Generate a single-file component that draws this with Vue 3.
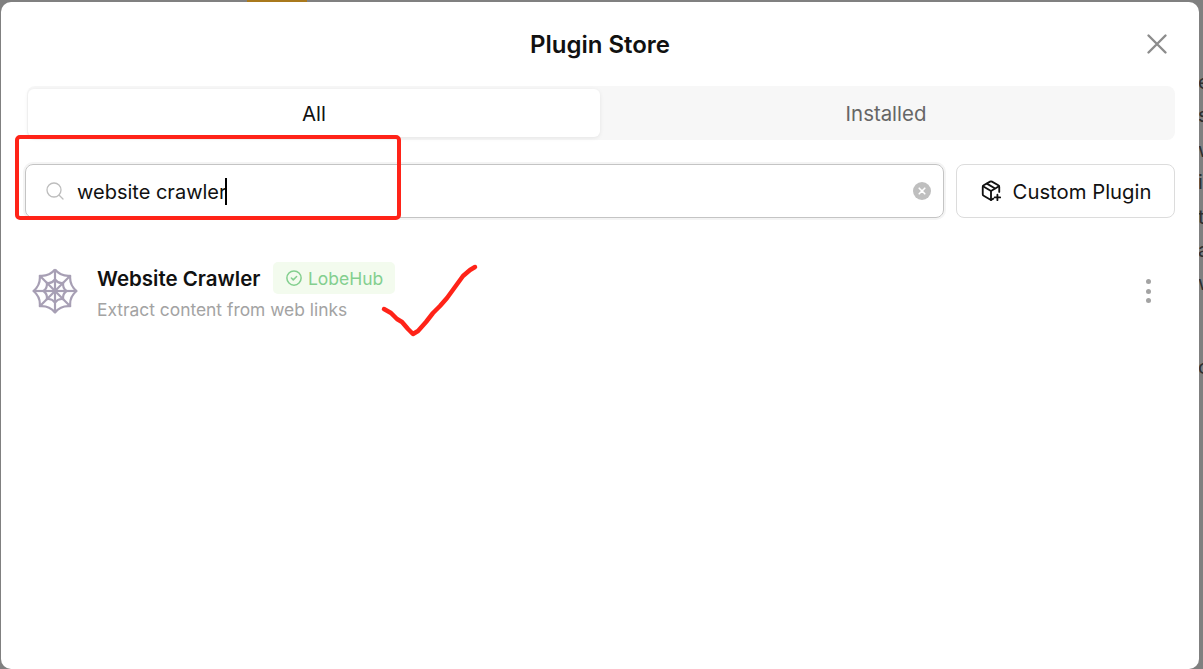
<template>
  <div class="backdrop">
    <div class="behind-strip"></div>
    <span
      v-for="g in behindGlyphs"
      :key="g.top"
      class="behind-glyph"
      :style="{ top: g.top + 'px' }"
    >{{ g.text }}</span>
    <div class="modal">
      <header class="modal-header">
        <h1>Plugin Store</h1>
        <button class="close-btn" aria-label="Close">
          <svg width="24" height="24" viewBox="0 0 24 24" fill="none" stroke="#8c8c8c" stroke-width="2.400" stroke-linecap="round">
            <path d="M3.500 3.500 20.500 20.500M20.500 3.500 3.500 20.500" />
          </svg>
        </button>
      </header>

      <div class="segmented">
        <div class="segment active">All</div>
        <div class="segment">Installed</div>
      </div>

      <div class="toolbar">
        <div class="search">
          <svg class="search-icon" width="20" height="20" viewBox="0 0 20 20" fill="none" stroke="#bdbdbd" stroke-width="1.300" stroke-linecap="round">
            <circle cx="9" cy="9" r="7" />
            <path d="M14.200 14.200 18 18" />
          </svg>
          <span class="search-text">website crawler</span>
          <span class="caret"></span>
          <svg class="clear-icon" width="18" height="18" viewBox="0 0 18 18">
            <circle cx="9" cy="9" r="9" fill="#bfbfbf" />
            <path d="M6.200 6.200 11.800 11.800M11.800 6.200 6.200 11.800" stroke="#fff" stroke-width="1.600" stroke-linecap="round" />
          </svg>
        </div>
        <button class="custom-btn">
          <svg width="22" height="22" viewBox="0 0 24 24" fill="none" stroke="#111" stroke-width="2" stroke-linecap="round" stroke-linejoin="round">
            <path d="M21 13V7.500a2 2 0 0 0-1-1.700l-7-4a2 2 0 0 0-2 0l-7 4a2 2 0 0 0-1 1.700v8a2 2 0 0 0 1 1.700l7 4a2 2 0 0 0 2 0l1.500-.9" />
            <path d="M7.500 4 16.500 9.200M3.300 6.800 12 12l8.700-5.200M12 22V12" />
            <path d="M19 16v6M16 19h6" />
          </svg>
          <span>Custom Plugin</span>
        </button>
      </div>

      <div class="plugin-row">
        <svg class="web-icon" width="46" height="46" viewBox="0 0 46 46" fill="none" stroke="#a79fb4" stroke-width="2.200" stroke-linejoin="round">
          <path v-for="(d, i) in webPaths" :key="i" :d="d" />
        </svg>
        <div class="plugin-info">
          <div class="plugin-title">
            <span class="plugin-name">Website Crawler</span>
            <span class="tag">
              <svg width="18" height="18" viewBox="0 0 24 24" fill="none" stroke="#83cf8e" stroke-width="2" stroke-linecap="round" stroke-linejoin="round">
                <circle cx="12" cy="12" r="9.500" />
                <path d="m8.500 12 2.500 2.500 4.500-4.500" />
              </svg>
              LobeHub
            </span>
          </div>
          <div class="plugin-desc">Extract content from web links</div>
        </div>
        <button class="more-btn" aria-label="More">
          <span></span><span></span><span></span>
        </button>
      </div>
    </div>

    <!-- red marks drawn over the screenshot -->
    <svg class="marks" width="1203" height="669" viewBox="0 0 1203 669" fill="none" stroke="#ff2318" stroke-linejoin="round" stroke-linecap="round">
      <rect x="17" y="137" width="382" height="81" rx="3" stroke-width="4" />
      <path
        d="M384 309 391 313 397 319 402 322 408 329 413 334 418 331 426 322 433 313 440 306 447 298 455 287 463 276 470 270 475 267"
        stroke-width="4.500"
      />
    </svg>
  </div>
</template>

<script setup>
// letters of the page behind the modal, only their left edge shows
const behindGlyphs = [
  { text: 'e', top: 70 },
  { text: 's', top: 103 },
  { text: 'w', top: 138 },
  { text: 'i', top: 170 },
  { text: 't', top: 205 },
  { text: 'a', top: 238 },
  { text: 'w', top: 271 },
  { text: 'c', top: 355 }
]

// spider web: spokes plus a ring of sagging threads
const cx = 23
const cy = 23
const spokes = 8
const webPaths = []

function ringPath(radius, sag) {
  let d = ''
  for (let i = 0; i < spokes; i++) {
    const a = (i * Math.PI * 2) / spokes - Math.PI / 2
    const b = ((i + 1) * Math.PI * 2) / spokes - Math.PI / 2
    const m = (a + b) / 2
    const x1 = cx + radius * Math.cos(a)
    const y1 = cy + radius * Math.sin(a)
    const x2 = cx + radius * Math.cos(b)
    const y2 = cy + radius * Math.sin(b)
    const qx = cx + sag * Math.cos(m)
    const qy = cy + sag * Math.sin(m)
    d += (i === 0 ? `M${x1} ${y1}` : '') + `Q${qx} ${qy} ${x2} ${y2}`
  }
  return d
}

for (let i = 0; i < spokes; i++) {
  const a = (i * Math.PI * 2) / spokes - Math.PI / 2
  webPaths.push(`M${cx} ${cy}L${cx + 21.500 * Math.cos(a)} ${cy + 21.500 * Math.sin(a)}`)
}
webPaths.push(ringPath(21.500, 15.500))
webPaths.push(ringPath(11.500, 8))
</script>

<style>
body {
  background: #808080;
  overflow: hidden;
}
</style>

<style scoped>
.backdrop {
  position: relative;
  width: 1203px;
  height: 669px;
  overflow: hidden;
  background: #808080;
  font-family: Inter, "Noto Sans", sans-serif;
}

.behind-strip {
  position: absolute;
  top: 0;
  left: 247px;
  width: 60px;
  height: 2px;
  background: #a9791c;
}

.behind-glyph {
  position: absolute;
  left: 1198px;
  font-size: 20px;
  line-height: 24px;
  color: #2e2e2e;
}

.modal {
  position: relative;
  box-sizing: border-box;
  width: 1198px;
  height: 667px;
  margin: 2px 0 0 1px;
  padding: 0 24px;
  background: #fff;
  border-radius: 10px;
}

.modal-header {
  position: relative;
  height: 84px;
  display: flex;
  align-items: center;
  justify-content: center;
}

.modal-header h1 {
  margin: 0;
  font-size: 24px;
  font-weight: 600;
  color: #111;
}

.close-btn {
  position: absolute;
  top: 30px;
  right: 6px;
  padding: 0;
  border: none;
  background: none;
  display: flex;
}

.segmented {
  box-sizing: border-box;
  display: flex;
  height: 54px;
  margin-left: 2px;
  padding: 3px 3px 3px 1px;
  background: #f7f7f7;
  border-radius: 8px;
}

.segment {
  flex: 1;
  display: flex;
  align-items: center;
  justify-content: center;
  padding-top: 1px;
  font-size: 20.400px;
  color: #666;
  border-radius: 6px;
}

.segment.active {
  color: #111;
  background: #fff;
  box-shadow: 0 1px 4px rgba(0, 0, 0, 0.08);
}

.toolbar {
  display: flex;
  gap: 12px;
  margin-top: 24px;
}

.search {
  box-sizing: border-box;
  flex: 1;
  height: 54px;
  display: flex;
  align-items: center;
  padding: 0 12px 0 19px;
  border: 1px solid #c4c4c4;
  border-radius: 8px;
  box-shadow: 0 0 0 2px #f4f4f4;
}

.search-text {
  margin-left: 12px;
  padding-top: 2px;
  font-size: 20px;
  color: #111;
}

.caret {
  width: 2px;
  height: 27px;
  margin-left: -2px;
  background: #000;
}

.clear-icon {
  margin-left: auto;
}

.custom-btn {
  box-sizing: border-box;
  width: 219px;
  height: 54px;
  display: flex;
  align-items: center;
  justify-content: center;
  gap: 11px;
  padding: 0;
  border: 1px solid #dcdcdc;
  border-radius: 8px;
  background: #fff;
  font-family: inherit;
  font-size: 20.300px;
  color: #111;
}

.plugin-row {
  display: flex;
  align-items: center;
  margin-top: 30px;
  padding: 14px 0 0 7px;
}

.plugin-info {
  margin-left: 19px;
}

.plugin-title {
  display: flex;
  align-items: center;
  gap: 13px;
}

.plugin-name {
  font-size: 20.500px;
  font-weight: 600;
  color: #111;
}

.tag {
  display: flex;
  align-items: center;
  gap: 5px;
  height: 32px;
  padding: 0 12px 0 11.500px;
  border-radius: 5px;
  background: #f3fbee;
  font-size: 17.500px;
  color: #83cf8e;
}

.plugin-desc {
  margin-top: 5px;
  font-size: 17.400px;
  color: #a3a3a3;
}

.more-btn {
  margin-left: auto;
  margin-right: 24px;
  padding: 0;
  border: none;
  background: none;
  display: flex;
  flex-direction: column;
  gap: 4.500px;
}

.more-btn span {
  width: 5px;
  height: 5px;
  border-radius: 50%;
  background: #a3a3a3;
}

.marks {
  position: absolute;
  top: 0;
  left: 0;
  pointer-events: none;
}
</style>
